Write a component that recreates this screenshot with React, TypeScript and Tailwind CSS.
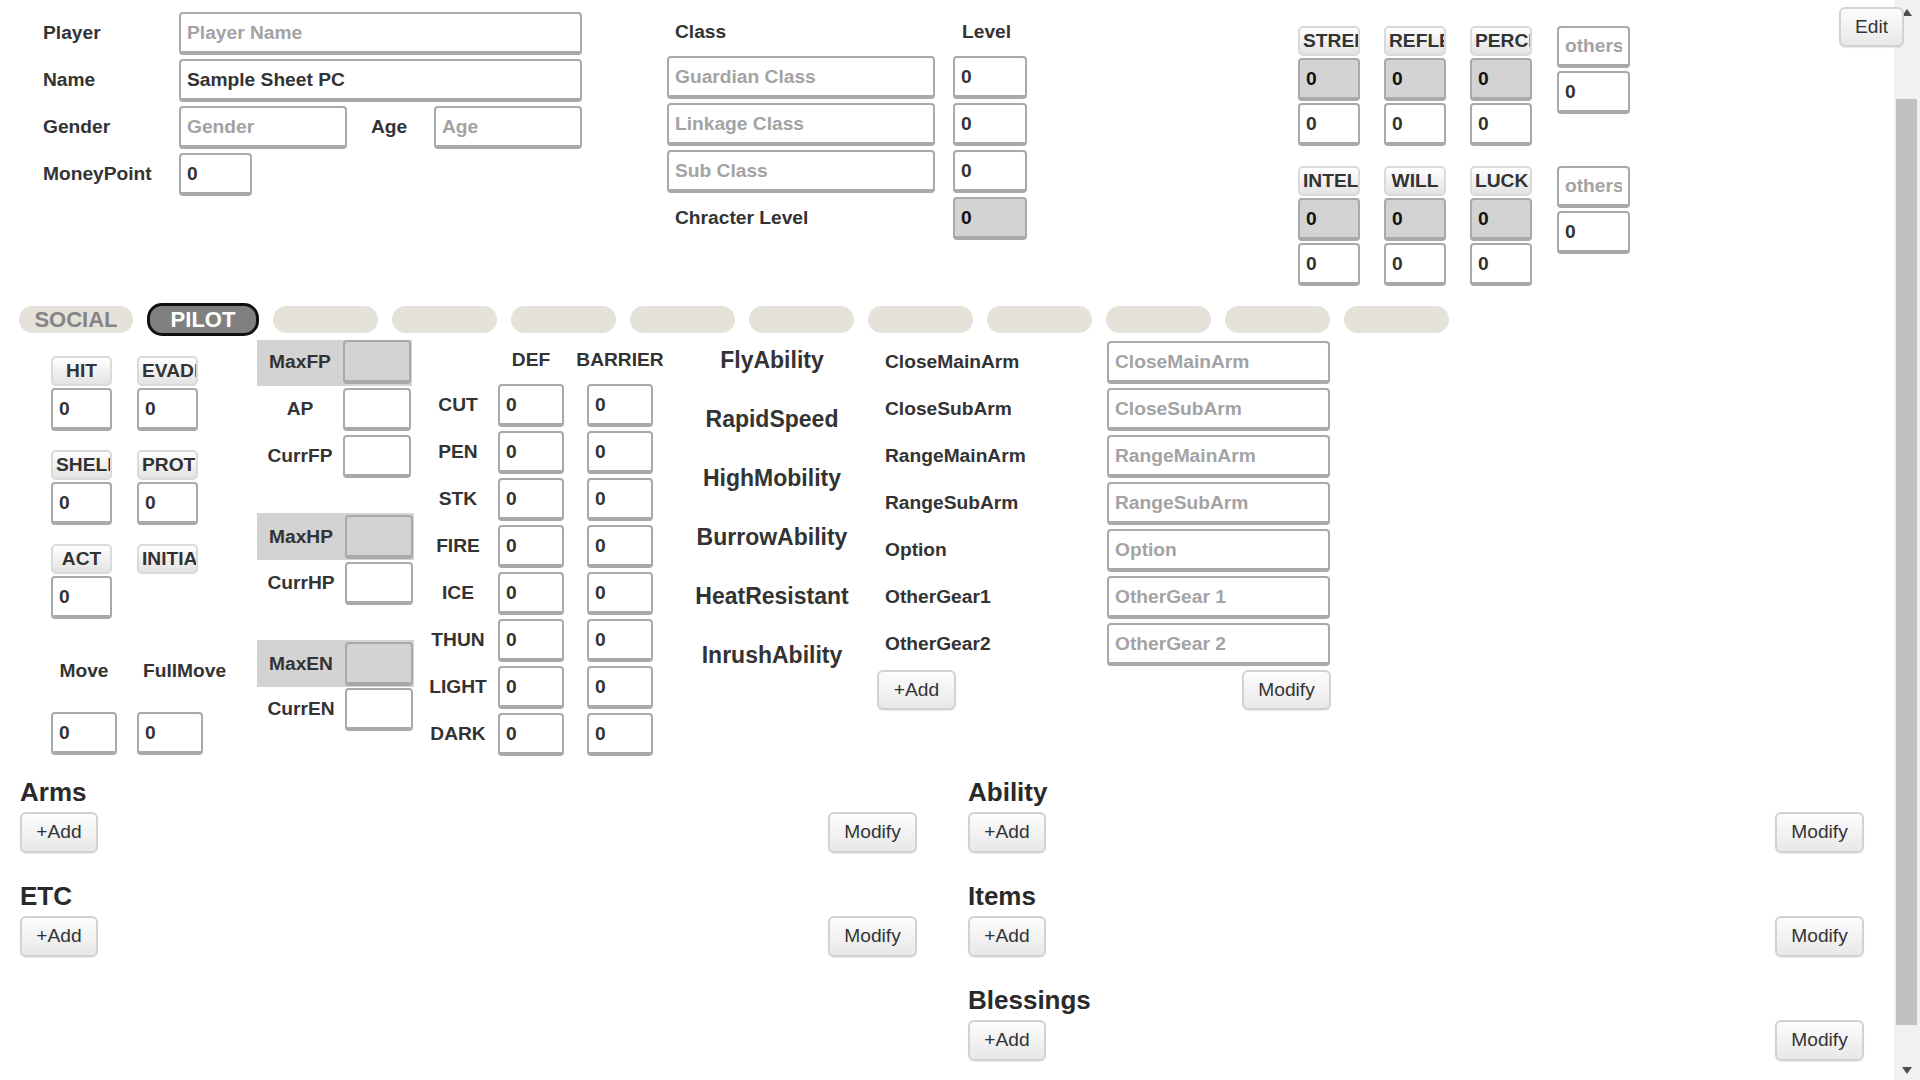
import React from 'react';

type FieldProps = {
  placeholder?: string;
  value?: string;
  gray?: boolean;
  className?: string;
};

// sheet-style input: grey frame, heavier bottom edge
const Field = ({ placeholder, value, gray, className = '' }: FieldProps) => (
  <input
    readOnly
    placeholder={placeholder}
    defaultValue={value}
    className={`shrink-0 rounded-[4px] border-2 border-b-4 border-[#a9a9a9] px-[6px] text-[19.2px] font-bold outline-none placeholder:text-[#a3a3a3] ${
      gray ? 'bg-[#d3d3d3] text-[#111]' : 'bg-white text-[#333]'
    } ${className}`}
  />
);

const StatBtn = ({ label, className = '' }: { label: string; className?: string }) => (
  <button
    type="button"
    className={`h-[30px] shrink-0 overflow-hidden whitespace-nowrap rounded-[5px] border-2 border-[#dadada] bg-linear-to-b from-white to-[#e3e3e3] px-[3px] text-center text-[19.2px] font-bold leading-none text-[#333] ${className}`}
  >
    {label}
  </button>
);

const Btn = ({ children, className = '' }: { children: React.ReactNode; className?: string }) => (
  <button
    type="button"
    className={`shrink-0 rounded-[6px] border-2 border-[#d2d2d2] bg-linear-to-b from-[#fdfdfd] to-[#e8e8e8] text-[19.2px] text-[#333] shadow-[0_1px_1px_rgba(0,0,0,0.08)] ${className}`}
  >
    {children}
  </button>
);

const StatBlock = ({ labels, className = '' }: { labels: string[]; className?: string }) => (
  <div className={`flex items-start gap-[24px] ${className}`}>
    {labels.map((l) => (
      <div key={l} className="flex w-[62px] flex-col">
        <StatBtn label={l} className="w-[62px]" />
        <Field gray value="0" className="mt-[2px] h-[43px] w-[62px]" />
        <Field value="0" className="mt-[2px] h-[43px] w-[62px]" />
      </div>
    ))}
    <div className="ml-[1px] flex w-[73px] flex-col">
      <Field placeholder="others" className="h-[42px] w-[73px]" />
      <Field value="0" className="mt-[3px] h-[43px] w-[73px]" />
    </div>
  </div>
);

const Section = ({ title }: { title: string }) => (
  <div>
    <h2 className="h-[30px] text-[26px] font-bold leading-[30px] text-[#2a2a2a]">{title}</h2>
    <div className="mt-[5px] flex justify-between">
      <Btn className="h-[41px] w-[78px]">+Add</Btn>
      <Btn className="h-[41px] w-[89px]">Modify</Btn>
    </div>
  </div>
);

const resist = ['CUT', 'PEN', 'STK', 'FIRE', 'ICE', 'THUN', 'LIGHT', 'DARK'];
const abilities = ['FlyAbility', 'RapidSpeed', 'HighMobility', 'BurrowAbility', 'HeatResistant', 'InrushAbility'];
const gear = [
  ['CloseMainArm', 'CloseMainArm'],
  ['CloseSubArm', 'CloseSubArm'],
  ['RangeMainArm', 'RangeMainArm'],
  ['RangeSubArm', 'RangeSubArm'],
  ['Option', 'Option'],
  ['OtherGear1', 'OtherGear 1'],
  ['OtherGear2', 'OtherGear 2'],
];

export default function App() {
  return (
    <div className="relative h-[1080px] w-[1920px] overflow-hidden bg-white font-['Liberation_Sans',Arial,sans-serif] text-[19.2px] text-[#333]">
      {/* header: player, class, stats */}
      <div className="flex items-start pt-[12px]">
        <div className="ml-[43px] flex w-[539px] shrink-0 flex-col gap-[4px] font-bold">
          <div className="flex h-[43px] items-center">
            <span className="w-[136px] shrink-0">Player</span>
            <Field placeholder="Player Name" className="h-[43px] w-[403px]" />
          </div>
          <div className="flex h-[43px] items-center">
            <span className="w-[136px] shrink-0">Name</span>
            <Field value="Sample Sheet PC" className="h-[43px] w-[403px]" />
          </div>
          <div className="flex h-[43px] items-center">
            <span className="w-[136px] shrink-0">Gender</span>
            <Field placeholder="Gender" className="h-[43px] w-[168px]" />
            <span className="ml-[24px] w-[63px] shrink-0">Age</span>
            <Field placeholder="Age" className="h-[43px] w-[148px]" />
          </div>
          <div className="flex h-[43px] items-center">
            <span className="w-[136px] shrink-0">MoneyPoint</span>
            <Field value="0" className="h-[43px] w-[73px]" />
          </div>
        </div>

        <div className="ml-[85px] flex shrink-0 flex-col font-bold">
          <div className="flex h-[40px] items-center">
            <span className="w-[268px] shrink-0 pl-[8px]">Class</span>
            <span className="ml-[18px] pl-[9px]">Level</span>
          </div>
          <div className="mt-[4px] flex flex-col gap-[4px]">
            {['Guardian Class', 'Linkage Class', 'Sub Class'].map((c) => (
              <div key={c} className="flex">
                <Field placeholder={c} className="h-[43px] w-[268px]" />
                <Field value="0" className="ml-[18px] h-[43px] w-[74px]" />
              </div>
            ))}
            <div className="flex items-center">
              <span className="w-[268px] shrink-0 pl-[8px]">Chracter Level</span>
              <Field gray value="0" className="ml-[18px] h-[43px] w-[74px]" />
            </div>
          </div>
        </div>

        <div className="ml-[271px] flex shrink-0 flex-col">
          <StatBlock labels={['STRENGTH', 'REFLEX', 'PERCEPTION']} className="mt-[14px]" />
          <StatBlock labels={['INTELLIGENCE', 'WILL', 'LUCK']} className="mt-[20px]" />
        </div>
      </div>

      <Btn className="absolute right-[16px] top-[7px] z-20 h-[40px] w-[65px]">Edit</Btn>

      {/* tabs */}
      <div className="mt-[17px] flex h-[33px] items-center gap-[14px] pl-[19px] font-bold">
        <div className="flex h-[27px] w-[114px] shrink-0 items-center justify-center rounded-[14px] bg-[#e5e2da] text-[22px] text-[#858585]">
          SOCIAL
        </div>
        <div className="flex h-[33px] w-[112px] shrink-0 items-center justify-center rounded-[15px] border-[3px] border-[#111] bg-[#808080] text-[22px] text-white">
          PILOT
        </div>
        {Array.from({ length: 10 }).map((_, i) => (
          <div key={i} className="h-[27px] w-[105px] shrink-0 rounded-[14px] bg-[#e5e2da]" />
        ))}
      </div>

      {/* pilot sheet */}
      <div className="mt-[4px] flex items-start font-bold">
        <div className="ml-[51px] flex w-[152px] shrink-0 flex-col pt-[16px]">
          <div className="flex gap-[25px]">
            <div className="flex flex-col">
              <StatBtn label="HIT" className="w-[61px]" />
              <Field value="0" className="mt-[2px] h-[43px] w-[61px]" />
            </div>
            <div className="flex flex-col">
              <StatBtn label="EVADE" className="w-[61px]" />
              <Field value="0" className="mt-[2px] h-[43px] w-[61px]" />
            </div>
          </div>
          <div className="mt-[19px] flex gap-[25px]">
            <div className="flex flex-col">
              <StatBtn label="SHELL" className="w-[61px]" />
              <Field value="0" className="mt-[2px] h-[43px] w-[61px]" />
            </div>
            <div className="flex flex-col">
              <StatBtn label="PROTECT" className="w-[61px]" />
              <Field value="0" className="mt-[2px] h-[43px] w-[61px]" />
            </div>
          </div>
          <div className="mt-[19px] flex items-start gap-[25px]">
            <div className="flex flex-col">
              <StatBtn label="ACT" className="w-[61px]" />
              <Field value="0" className="mt-[2px] h-[43px] w-[61px]" />
            </div>
            <StatBtn label="INITIATIVE" className="w-[61px]" />
          </div>
          <div className="mt-[39px] flex h-[27px] items-center whitespace-nowrap">
            <span className="w-[66px] shrink-0 text-center">Move</span>
            <span className="ml-[20px] shrink-0 pl-[6px]">FullMove</span>
          </div>
          <div className="mt-[27px] flex">
            <Field value="0" className="h-[43px] w-[66px]" />
            <Field value="0" className="ml-[20px] h-[43px] w-[66px]" />
          </div>
        </div>

        <div className="ml-[54px] flex w-[157px] shrink-0 flex-col">
          <div className="flex h-[46px] w-[155px] items-start bg-[#d3d3d3]">
            <span className="flex h-[44px] w-[86px] shrink-0 items-center justify-center">MaxFP</span>
            <Field gray className="h-[44px] w-[68px]" />
          </div>
          <div className="mt-[2px] flex items-center">
            <span className="w-[86px] shrink-0 text-center">AP</span>
            <Field className="h-[43px] w-[68px]" />
          </div>
          <div className="mt-[4px] flex items-center">
            <span className="w-[86px] shrink-0 text-center">CurrFP</span>
            <Field className="h-[43px] w-[68px]" />
          </div>
          <div className="mt-[35px] flex h-[47px] w-[157px] items-start bg-[#d3d3d3] pt-[2px]">
            <span className="flex h-[44px] w-[88px] shrink-0 items-center justify-center">MaxHP</span>
            <Field gray className="h-[44px] w-[68px]" />
          </div>
          <div className="mt-[2px] flex items-center">
            <span className="w-[88px] shrink-0 text-center">CurrHP</span>
            <Field className="h-[43px] w-[68px]" />
          </div>
          <div className="mt-[35px] flex h-[47px] w-[157px] items-start bg-[#d3d3d3] pt-[2px]">
            <span className="flex h-[44px] w-[88px] shrink-0 items-center justify-center">MaxEN</span>
            <Field gray className="h-[44px] w-[68px]" />
          </div>
          <div className="mt-[1px] flex items-center">
            <span className="w-[88px] shrink-0 text-center">CurrEN</span>
            <Field className="h-[43px] w-[68px]" />
          </div>
        </div>

        <div className="ml-[9px] flex shrink-0 flex-col pt-[7px]">
          <div className="flex h-[27px] items-center">
            <span className="w-[70px] shrink-0" />
            <span className="ml-[5px] flex w-[66px] shrink-0 justify-center">DEF</span>
            <span className="ml-[23px] flex w-[66px] shrink-0 justify-center whitespace-nowrap">BARRIER</span>
          </div>
          <div className="mt-[10px] flex flex-col gap-[4px]">
            {resist.map((r) => (
              <div key={r} className="flex items-center">
                <span className="flex w-[70px] shrink-0 justify-center">{r}</span>
                <Field value="0" className="ml-[5px] h-[43px] w-[66px]" />
                <Field value="0" className="ml-[23px] h-[43px] w-[66px]" />
              </div>
            ))}
          </div>
        </div>

        <div className="ml-[39px] flex w-[160px] shrink-0 flex-col items-center gap-[33px] pt-[7px] text-[23px]">
          {abilities.map((a) => (
            <span key={a} className="h-[26px] whitespace-nowrap leading-[26px] text-[#333]">
              {a}
            </span>
          ))}
        </div>

        <div className="ml-[25px] flex w-[454px] shrink-0 flex-col pt-[1px]">
          <div className="flex flex-col gap-[4px]">
            {gear.map(([label, ph]) => (
              <div key={label} className="flex items-center">
                <span className="w-[230px] shrink-0 pl-[8px]">{label}</span>
                <Field placeholder={ph} className="h-[43px] w-[223px]" />
              </div>
            ))}
          </div>
          <div className="mt-[4px] flex justify-between font-normal">
            <Btn className="h-[40px] w-[79px]">+Add</Btn>
            <Btn className="h-[40px] w-[89px]">Modify</Btn>
          </div>
        </div>
      </div>

      {/* lists */}
      <div className="mt-[21px] flex gap-[51px] pl-[20px]">
        <div className="flex w-[897px] shrink-0 flex-col gap-[28px]">
          <Section title="Arms" />
          <Section title="ETC" />
        </div>
        <div className="flex w-[896px] shrink-0 flex-col gap-[28px]">
          <Section title="Ability" />
          <Section title="Items" />
          <Section title="Blessings" />
        </div>
      </div>

      {/* window scrollbar */}
      <div className="absolute right-0 top-0 z-10 h-[1080px] w-[26px] bg-[#f1f1f1]">
        <svg className="absolute left-[8px] top-[9px]" width="10" height="7" viewBox="0 0 10 7">
          <polygon points="5,0 10,7 0,7" fill="#505050" />
        </svg>
        <div className="absolute left-[2px] top-[99px] h-[926px] w-[21px] bg-[#c1c1c1]" />
        <svg className="absolute bottom-[6px] left-[8px]" width="10" height="7" viewBox="0 0 10 7">
          <polygon points="0,0 10,0 5,7" fill="#505050" />
        </svg>
      </div>
    </div>
  );
}
